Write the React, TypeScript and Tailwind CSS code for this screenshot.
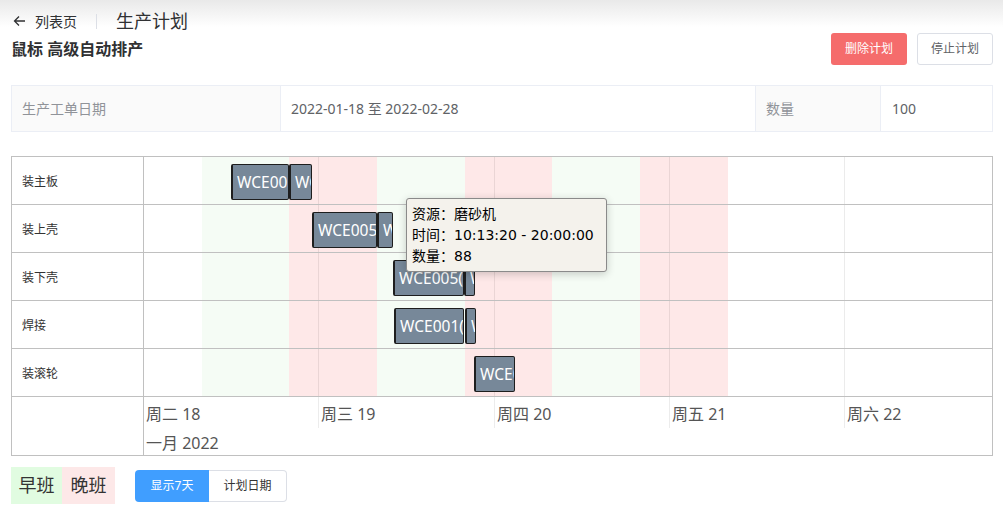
import React from "react";

const FONT = '"Noto Sans", "Noto Sans CJK SC", sans-serif';

const ORIGIN = 144; // absolute x of timeline content start

const bands: { a: number; b: number; c: string }[] = [
  { a: 202, b: 289, c: "g" },
  { a: 289, b: 377, c: "r" },
  { a: 377, b: 465, c: "g" },
  { a: 465, b: 552, c: "r" },
  { a: 552, b: 640, c: "g" },
  { a: 640, b: 728, c: "r" },
];

const dayLines = [318, 494, 669, 844];

const rows: { label: string; bars: { a: number; b: number; t: string }[] }[] = [
  {
    label: "装主板",
    bars: [
      { a: 231, b: 289, t: "WCE005(装主板)" },
      { a: 289, b: 312, t: "WCE001(装主板)" },
    ],
  },
  {
    label: "装上壳",
    bars: [
      { a: 312, b: 377, t: "WCE005(装上壳)" },
      { a: 377, b: 393, t: "WCE001(装上壳)" },
    ],
  },
  {
    label: "装下壳",
    bars: [
      { a: 393, b: 464, t: "WCE005(装下壳)" },
      { a: 464, b: 475, t: "WCE001(装下壳)" },
    ],
  },
  {
    label: "焊接",
    bars: [
      { a: 394, b: 464, t: "WCE001(焊接)" },
      { a: 465, b: 476, t: "WCE005(焊接)" },
    ],
  },
  {
    label: "装滚轮",
    bars: [{ a: 474, b: 515, t: "WCE005(装滚轮)" }],
  },
];

function Timeline({ bars }: { bars: { a: number; b: number; t: string }[] }) {
  return (
    <div className="relative flex-1 h-full overflow-hidden">
      {bands.map((bd, i) => (
        <div
          key={i}
          className={
            "absolute top-0 bottom-0 " +
            (bd.c === "g" ? "bg-[#f5fcf5]" : "bg-[#fee8e8]")
          }
          style={{ left: bd.a - ORIGIN, width: bd.b - bd.a }}
        />
      ))}
      {dayLines.map((x) => (
        <div
          key={x}
          className="absolute top-0 bottom-0 w-px bg-[rgba(0,0,0,0.08)]"
          style={{ left: x - ORIGIN }}
        />
      ))}
      {bars.map((br, i) => (
        <div
          key={i}
          className="absolute top-[7px] h-[36px] flex items-center overflow-hidden whitespace-nowrap rounded-[2px] border border-l-2 border-[#1e1e1e] bg-[#778899] pl-[4px] pt-[1px] text-[15.5px] text-white"
          style={{ left: br.a - ORIGIN, width: br.b - br.a }}
        >
          {br.t}
        </div>
      ))}
    </div>
  );
}

export default function App() {
  return (
    <div
      className="w-full min-h-[524px] bg-[linear-gradient(to_bottom,#e9e9e9_0px,#ffffff_27px)] pl-[11px] pr-[10px] pt-[10px]"
      style={{ fontFamily: FONT }}
    >
      {/* page header */}
      <div className="flex h-[22px] items-center">
        <div className="flex items-center pl-[2px] text-[14px] text-[#303133]">
          <svg width="13" height="12" viewBox="0 0 13 12" className="mr-[9px]">
            <path
              d="M12 6H1.5M6 1.5L1.5 6L6 10.5"
              fill="none"
              stroke="#303133"
              strokeWidth="1.3"
            />
          </svg>
          <span>列表页</span>
        </div>
        <div className="mx-[19px] h-[15px] w-px bg-[#dcdfe6]" />
        <span className="text-[18px] text-[#303133]">生产计划</span>
      </div>

      <div className="mt-[1px] flex h-[32px] items-center justify-between">
        <span className="text-[16px] font-bold text-[#303133]">鼠标 高级自动排产</span>
        <div className="flex gap-[10px]">
          <button className="h-[32px] w-[76px] rounded-[3px] bg-[#f56c6c] text-[12px] text-white">
            删除计划
          </button>
          <button className="h-[32px] w-[76px] rounded-[3px] border border-[#dcdfe6] bg-white text-[12px] text-[#606266]">
            停止计划
          </button>
        </div>
      </div>

      {/* descriptions */}
      <div className="mt-[20px] flex h-[47px] border border-[#ebeef5] text-[14px]">
        <div className="flex w-[269px] items-center border-r border-[#ebeef5] bg-[#fafafa] px-[10px] text-[#909399]">
          生产工单日期
        </div>
        <div className="flex w-[475px] items-center border-r border-[#ebeef5] px-[10px] text-[#606266]">
          2022-01-18 至 2022-02-28
        </div>
        <div className="flex w-[125px] items-center border-r border-[#ebeef5] bg-[#fafafa] px-[10px] text-[#909399]">
          数量
        </div>
        <div className="flex flex-1 items-center px-[11px] text-[#606266]">100</div>
      </div>

      {/* gantt */}
      <div className="relative mt-[24px] border border-[#c0c0c0]">
        {rows.map((r) => (
          <div key={r.label} className="flex h-[48px] border-b border-[#c0c0c0]">
            <div className="flex w-[132px] shrink-0 items-center border-r border-[#c0c0c0] pl-[10px] pt-[3px] text-[12px] text-[#333]">
              {r.label}
            </div>
            <Timeline bars={r.bars} />
          </div>
        ))}
        <div className="flex h-[58px]">
          <div className="w-[132px] shrink-0 border-r border-[#c0c0c0]" />
          <div className="flex flex-1 flex-col overflow-hidden text-[16px] text-[#555]">
            <div className="flex h-[31px] items-center">
              <div className="flex h-full w-[174px] shrink-0 items-center pl-[2px] pt-[2px]">周二 18</div>
              <div className="flex h-full w-[176px] shrink-0 items-center border-l border-[#ececec] pl-[2px] pt-[2px]">周三 19</div>
              <div className="flex h-full w-[175px] shrink-0 items-center border-l border-[#ececec] pl-[2px] pt-[2px]">周四 20</div>
              <div className="flex h-full w-[175px] shrink-0 items-center border-l border-[#ececec] pl-[2px] pt-[2px]">周五 21</div>
              <div className="flex h-full flex-1 items-center border-l border-[#ececec] pl-[2px] pt-[2px]">周六 22</div>
            </div>
            <div className="flex flex-1 items-center pl-[2px] pt-[3px]">一月 2022</div>
          </div>
        </div>

        {/* tooltip */}
        <div
          className="absolute left-[394px] top-[41px] h-[74px] w-[201px] whitespace-nowrap rounded-[3px] border border-[#8a8a8a] bg-[#f4f2ec] px-[5px] pt-[5px] text-[14px] leading-[21px] text-black shadow-[0_2px_8px_rgba(0,0,0,0.2)]"
          style={{ fontFamily: '"DejaVu Sans", "Noto Sans CJK SC", sans-serif' }}
        >
          <div>资源：磨砂机</div>
          <div>时间：10:13:20 - 20:00:00</div>
          <div>数量：88</div>
        </div>
      </div>

      {/* legend & buttons */}
      <div className="mt-[11px] flex items-center">
        <div className="flex h-[37px] w-[51px] items-center justify-center bg-[#e1fce1] text-[18px] text-[#333]">
          早班
        </div>
        <div className="flex h-[37px] w-[53px] items-center justify-center bg-[#fde8e8] text-[18px] text-[#333]">
          晚班
        </div>
        <div className="ml-[20px] flex h-[32px] text-[12px]">
          <button className="h-full w-[74px] rounded-l-[4px] bg-[#409eff] text-white">显示7天</button>
          <button className="h-full w-[78px] rounded-r-[4px] border border-l-0 border-[#dcdfe6] bg-white text-[#333]">
            计划日期
          </button>
        </div>
      </div>
    </div>
  );
}
